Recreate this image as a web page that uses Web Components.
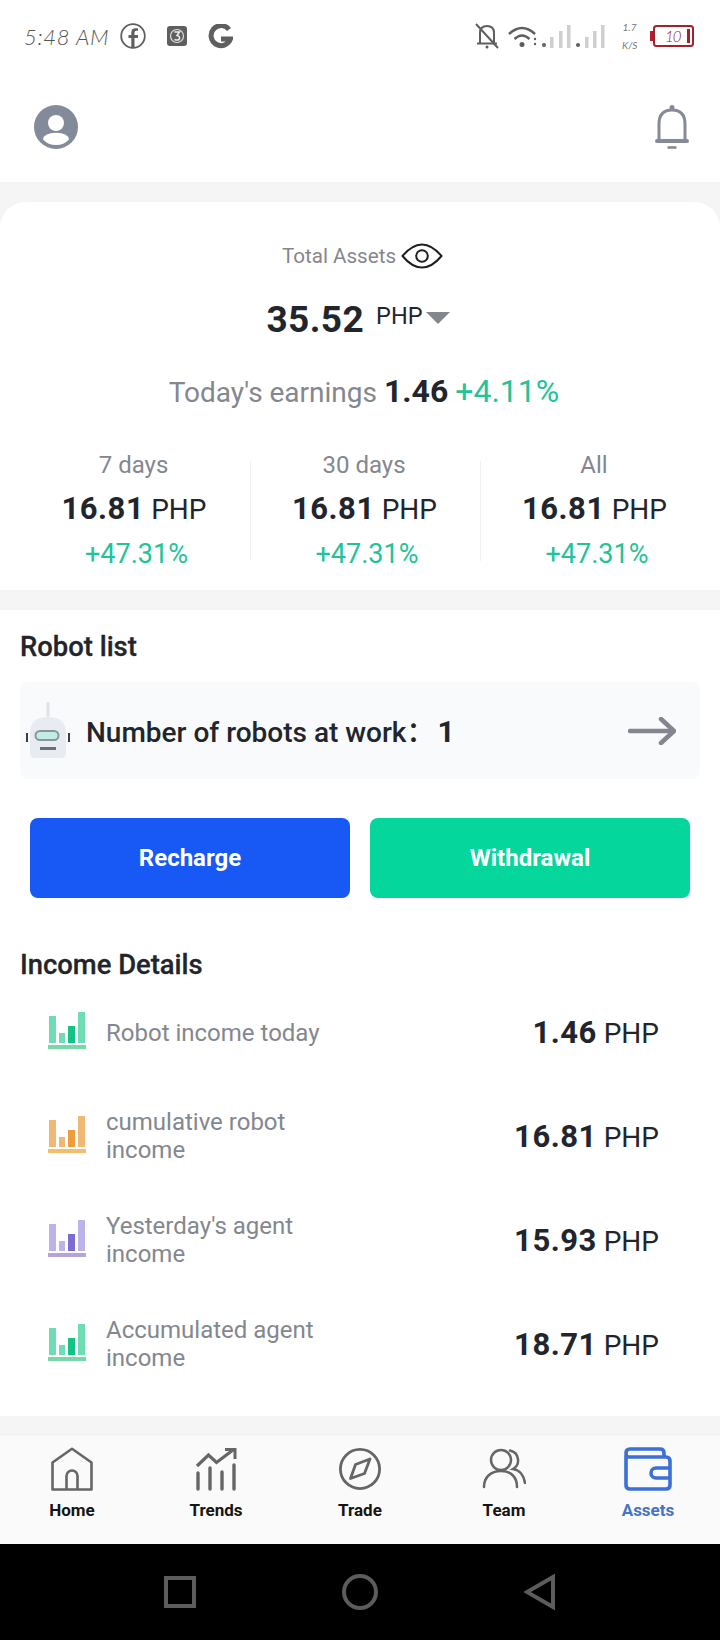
<!DOCTYPE html>
<html>
<head>
<meta charset="utf-8">
<style>
  html, body { margin: 0; padding: 0; background: #fff; }
  body { width: 720px; height: 1640px; overflow: hidden; font-family: Roboto, "Liberation Sans", sans-serif; color: #22252b; }
</style>
</head>
<body>
<status-bar></status-bar>
<top-header></top-header>
<asset-card>
  <stat-col label="7 days"></stat-col>
  <stat-col label="30 days"></stat-col>
  <stat-col label="All"></stat-col>
</asset-card>
<main-panel>
  <robot-list></robot-list>
  <action-row></action-row>
  <section-title style="margin-top:49px">Income Details</section-title>
  <income-row color="#6fdcb3" dark="#12c384" base="#7ad8a8" value="1.46" style="height:103px;margin-top:-2px">Robot income today</income-row>
  <income-row color="#eeb875" dark="#ef9c3c" base="#f3bd6e" value="16.81">cumulative robot<br>income</income-row>
  <income-row color="#bdb2ea" dark="#7e6cd6" base="#b3a4dc" value="15.93">Yesterday's agent<br>income</income-row>
  <income-row color="#6fdcb3" dark="#12c384" base="#7ad8a8" value="18.71">Accumulated agent<br>income</income-row>
</main-panel>
<tab-bar>
  <tab-item label="Home"><svg viewBox="0 0 44 44" width="44" height="44" fill="none" stroke="#666" stroke-width="2.6"><path d="M2.5 42.5V15.5L22 1.8 41.5 15.5V42.5H2.5Z" stroke-linejoin="round"/><path d="M16.5 42V29a5.500 5.500 0 0 1 11 0V42"/></svg></tab-item>
  <tab-item label="Trends"><svg viewBox="0 0 44 44" width="44" height="44" fill="none" stroke="#666"><path d="M3 19 14.500 8 22.500 15.500 39 3" stroke-width="3.200"/><path d="M31 2.500H41V12" stroke-width="3"/><path d="M4 26V42M16 21V42M28 25V42M40 18V42" stroke-width="3.400" stroke-linecap="round"/></svg></tab-item>
  <tab-item label="Trade"><svg viewBox="0 0 44 44" width="44" height="44" fill="none" stroke="#666" stroke-width="2.800"><circle cx="22" cy="22" r="19.600"/><path d="M32 12 26.500 26.500 12.500 31.500 17.500 17.500Z" stroke-linejoin="round"/></svg></tab-item>
  <tab-item label="Team"><svg viewBox="0 0 44 44" width="44" height="44" fill="none" stroke="#666" stroke-width="2.500" stroke-linecap="round"><circle cx="19" cy="13" r="10"/><path d="M2 40C2 30 9 24 19 24S35 30 35 40"/><path d="M28 3.500A10 10 0 0 1 31 22C38 23 42 29 43 36"/></svg></tab-item>
  <tab-item label="Assets" active><svg viewBox="0 0 48 44" width="48" height="44" fill="none" stroke="#3a70d8" stroke-width="3.600" stroke-linejoin="round"><path d="M2 8V38Q2 42 6 42H42Q46 42 46 38V14Q46 10 42 10H5Q2 10 2 6 2 2 6 2H36Q40 2 40 6V10"/><path d="M46 21H32A5 5 0 0 0 32 31H46"/></svg></tab-item>
</tab-bar>
<system-nav></system-nav>

<script>
class StatusBar extends HTMLElement {
  constructor() {
    super();
    this.attachShadow({ mode: "open" }).innerHTML = `
      <style>
        :host { display: flex; align-items: center; height: 72px; box-sizing: border-box; padding: 0 26px 0 24px; color: #5f5f5f; }
        .time { font: italic 300 22px Lato, "Liberation Sans", sans-serif; width: 96px; white-space: nowrap; letter-spacing: .7px; color: #555; }
        .left { display: flex; align-items: center; }
        .right { margin-left: auto; display: flex; align-items: center; }
        svg { display: block; }
        .speed { width: 15px; margin: 0 13px 0 15px; font: italic 400 10px/18px Lato, sans-serif; text-align: center; color: #777; }
        .batt { position: relative; width: 44px; height: 22px; }
        .batt span { position: absolute; left: 15px; top: 0; font: italic 300 15px/22px Lato, sans-serif; letter-spacing: -1px; color: #8f1d2c; }
      </style>
      <div class="left">
        <div class="time">5:48 AM</div>
        <svg width="26" height="26" viewBox="0 0 26 26" fill="none"><circle cx="13" cy="13" r="11.800" stroke="#5f5f5f" stroke-width="1.800"/><path d="M14.500 25V15H18V12H14.500V9.500Q14.500 7.800 16.300 7.800H18V5.200H15.500Q11.300 5.200 11.300 9.500V12H8.500V15H11.300V25Z" fill="#5f5f5f"/></svg>
        <svg style="margin-left:21px" width="20" height="20" viewBox="0 0 20 20"><rect width="20" height="20" rx="3" fill="#5f5f5f"/><circle cx="10" cy="10" r="6.500" fill="none" stroke="#ddd" stroke-width="1.200"/><path d="M7.500 6H12.500L10 9.500Q13 10 12.500 12.500T7.500 13.500" fill="none" stroke="#eee" stroke-width="1.500"/></svg>
        <svg style="margin-left:21px" width="25" height="25" viewBox="0 0 25 25"><path d="M21 5.500A10 10 0 1 0 22.500 15H13" fill="none" stroke="#5f5f5f" stroke-width="5"/></svg>
      </div>
      <div class="right">
        <svg width="24" height="26" viewBox="0 0 24 26" fill="none" stroke="#5f5f5f" stroke-width="2"><path d="M5 20V10Q5 3 12 3T19 10V20"/><path d="M2 20.500H22" /><path d="M1 1 23 25" /><circle cx="12" cy="24" r="1.500" fill="#5f5f5f" stroke="none"/></svg>
        <svg style="margin-left:9px" width="29" height="23" viewBox="0 0 29 23" fill="none" stroke="#5f5f5f" stroke-width="2.400"><path d="M1 9Q14 -3 27 9"/><path d="M6.500 14Q14 7 21.500 14"/><circle cx="14" cy="19.500" r="2.500" fill="#5f5f5f" stroke="none"/></svg>
        <svg style="margin-left:-6px" width="76" height="24" viewBox="0 0 76 24"><circle cx="4" cy="15" r="1.200" fill="#5f5f5f"/><circle cx="4" cy="20" r="1.200" fill="#5f5f5f"/><circle cx="13" cy="21" r="2" fill="#5f5f5f"/><g fill="#cfcfcf"><rect x="19" y="13" width="3.500" height="11"/><rect x="28" y="7" width="3.500" height="17"/><rect x="36" y="1" width="3.500" height="23"/></g><circle cx="47" cy="21" r="2" fill="#5f5f5f"/><g fill="#cfcfcf"><rect x="54" y="13" width="3.500" height="11"/><rect x="62" y="7" width="3.500" height="17"/><rect x="70" y="1" width="3.500" height="23"/></g></svg>
        <div class="speed">1.7<br>K/S</div>
        <div class="batt">
          <svg width="44" height="22" viewBox="0 0 44 22" fill="none"><rect x="0" y="6" width="3" height="10" fill="#b3202e"/><rect x="4" y="1" width="39" height="20" rx="2.500" stroke="#a5202d" stroke-width="2"/><rect x="37" y="4" width="3" height="14" fill="#a5202d"/></svg>
          <span>10</span>
        </div>
      </div>`;
  }
}

class TopHeader extends HTMLElement {
  constructor() {
    super();
    this.attachShadow({ mode: "open" }).innerHTML = `
      <style>
        :host { display: flex; align-items: center; justify-content: space-between; height: 110px; box-sizing: border-box; padding: 0 31px 0 34px; background: #fff; }
        svg { display: block; }
      </style>
      <svg width="44" height="44" viewBox="0 0 44 44"><circle cx="22" cy="22" r="22" fill="#838a9a"/><circle cx="22" cy="18" r="8" fill="#fff"/><path d="M9 34.500Q10 27.800 22 27.800T35 34.500Q30 40 22 40T9 34.500Z" fill="#fff"/></svg>
      <svg width="34" height="44" viewBox="0 0 34 44" fill="none" stroke="#868a94"><circle cx="17" cy="2.500" r="2.500" fill="#868a94" stroke="none"/><path d="M4 36V19Q4 5 17 5T30 19V36" stroke-width="3"/><path d="M2 36H32" stroke-width="4" stroke-linecap="round"/><path d="M12.500 42.500H21.500" stroke-width="2.600"/></svg>`;
  }
}

class AssetCard extends HTMLElement {
  constructor() {
    super();
    this.attachShadow({ mode: "open" }).innerHTML = `
      <style>
        :host { display: block; background: #f5f5f5; padding: 20px 0; }
        .card { background: #fff; border-radius: 26px 26px 0 0; height: 388px; box-sizing: border-box; padding-top: 40px; text-align: center; }
        .title { display: flex; justify-content: center; align-items: center; gap: 5px; height: 28px; font-size: 20.600px; color: #84878e; padding-left: 5px; }
        .total { display: flex; justify-content: center; margin-top: 28px; height: 44px; color: #22252b; padding-right: 4px; }
        .num { font-size: 37px; font-weight: 700; line-height: 44px; letter-spacing: .4px; }
        .unit { font-size: 23.500px; line-height: 36px; margin-left: 12px; }
        .tri { width: 0; height: 0; margin: 14px 0 0 3px; border: 12px solid transparent; border-top: 12px solid #85878f; border-bottom: 0; }
        .today { margin-top: 31px; padding-left: 8px; font-size: 28px; line-height: 36px; color: #84878e; white-space: nowrap; }
        .today b { color: #22252b; font-weight: 700; font-size: 32px; }
        .today i { color: #22c398; font-style: normal; font-size: 32px; }
        .stats { display: grid; grid-template-columns: repeat(3, 230px); margin: 50px 0 0 20px; }
        ::slotted(stat-col:not(:first-child)) { border-left: 1px solid #f1f1f3; }
      </style>
      <div class="card">
        <div class="title">Total Assets
          <svg width="42" height="26" viewBox="0 0 42 26" fill="none" stroke="#1f1f1f" stroke-width="2"><path d="M1.500 13Q11 1.500 21 1.500T40.500 13Q31 24.500 21 24.500T1.500 13Z" stroke-linejoin="round"/><circle cx="21" cy="13" r="5.800"/></svg>
        </div>
        <div class="total"><span class="num">35.52</span><span class="unit">PHP</span><span class="tri"></span></div>
        <div class="today">Today's earnings <b>1.46</b> <i>+4.11%</i></div>
        <div class="stats"><slot></slot></div>
      </div>`;
  }
}

class StatCol extends HTMLElement {
  constructor() {
    super();
    this.attachShadow({ mode: "open" }).innerHTML = `
      <style>
        :host { display: block; height: 100px; text-align: center; }
        .wrap { margin-top: -11px; }
        .label { font-size: 24px; line-height: 30px; color: #84878e; padding-right: 3px; }
        .value { font-size: 28px; line-height: 36px; margin-top: 11px; padding-right: 2px; color: #22252b; white-space: nowrap; }
        .value b { font-size: 31px; font-weight: 700; letter-spacing: .5px; }
        .pct { font-size: 27px; line-height: 32px; margin-top: 10px; color: #22c398; padding-left: 3px; }
      </style>
      <div class="wrap">
        <div class="label">${this.getAttribute("label")}</div>
        <div class="value"><b>16.81</b> <span>PHP</span></div>
        <div class="pct">+47.31%</div>
      </div>`;
  }
}

class MainPanel extends HTMLElement {
  constructor() {
    super();
    this.attachShadow({ mode: "open" }).innerHTML = `
      <style>
        :host { display: block; background: #fff; height: 806px; box-sizing: border-box; padding-top: 19px; }
      </style>
      <slot></slot>`;
  }
}

class SectionTitle extends HTMLElement {
  constructor() {
    super();
    this.attachShadow({ mode: "open" }).innerHTML = `
      <style>
        :host { display: block; padding-left: 20px; font-size: 27.400px; line-height: 36px; font-weight: 500; color: #22252b; -webkit-text-stroke: .3px #22252b; }
      </style>
      <slot></slot>`;
  }
}

class RobotList extends HTMLElement {
  constructor() {
    super();
    this.attachShadow({ mode: "open" }).innerHTML = `
      <style>
        :host { display: block; }
        .row { display: flex; align-items: center; height: 97px; margin: 17px 20px 0; background: #f9fafb; border-radius: 8px; box-sizing: border-box; padding: 0 24px 0 6px; }
        .name { margin: -1px 0 0 16px; font: 500 28px Roboto, "Noto Sans CJK SC", sans-serif; color: #22252b; white-space: nowrap; }
        .name span { margin-left: 3px; font-weight: 700; font-size: 30px; }
        svg { display: block; }
        .arrow { margin-left: auto; }
      </style>
      <section-title>Robot list</section-title>
      <div class="row">
        <svg width="44" height="60" viewBox="0 0 44 60" fill="none">
          <rect x="20.500" y="1" width="3" height="15" rx="1.500" fill="#dfe2e6"/>
          <path d="M4 52V32Q4 16 22 16T40 32V52Q40 57 35 57H9Q4 57 4 52Z" fill="#e8ecf2"/>
          <rect x="9.500" y="30" width="23" height="9" rx="4.500" fill="#c4ebe4" stroke="#85999c" stroke-width="2"/>
          <rect x="14" y="46" width="16" height="3" fill="#6a7078"/>
          <path d="M1 32V41M43 32V41" stroke="#3a3d44" stroke-width="2"/>
        </svg>
        <div class="name">Number of robots at work：<span>1</span></div>
        <svg class="arrow" width="48" height="28" viewBox="0 0 48 28" fill="none" stroke="#84858f" stroke-width="4.500" stroke-linecap="round" stroke-linejoin="round"><path d="M2 14H45"/><path d="M33 2 46 14 33 26"/></svg>
      </div>`;
  }
}

class ActionRow extends HTMLElement {
  constructor() {
    super();
    this.attachShadow({ mode: "open" }).innerHTML = `
      <style>
        :host { display: flex; gap: 20px; margin: 39px 30px 0; }
        div { flex: 1; height: 80px; border-radius: 8px; display: flex; align-items: center; justify-content: center; color: #fff; font-size: 24px; font-weight: 700; }
        .blue { background: #1859f5; }
        .green { background: #05d69c; }
      </style>
      <div class="blue">Recharge</div>
      <div class="green">Withdrawal</div>`;
  }
}

class IncomeRow extends HTMLElement {
  constructor() {
    super();
    const c = this.getAttribute("color"), d = this.getAttribute("dark"), b = this.getAttribute("base");
    this.attachShadow({ mode: "open" }).innerHTML = `
      <style>
        :host { display: flex; align-items: center; height: 104px; padding: 0 61px 0 48px; }
        svg { display: block; flex: none; margin-top: -4px; }
        .text { margin-left: 20px; font-size: 24px; line-height: 28px; color: #84878e; white-space: nowrap; }
        .val { margin-left: auto; font-size: 28px; color: #22252b; white-space: nowrap; }
        .val b { font-size: 31px; font-weight: 700; letter-spacing: .5px; }
      </style>
      <svg width="38" height="37" viewBox="0 0 38 37">
        <rect x="1" y="4" width="7" height="27" fill="${c}"/>
        <rect x="11" y="21" width="6" height="10" fill="${c}"/>
        <rect x="20" y="14" width="7" height="17" fill="${d}"/>
        <rect x="30" y="0" width="7" height="31" fill="${c}"/>
        <rect x="0" y="33" width="38" height="4" fill="${b}"/>
      </svg>
      <div class="text"><slot></slot></div>
      <div class="val"><b>${this.getAttribute("value")}</b> PHP</div>`;
  }
}

class TabBar extends HTMLElement {
  constructor() {
    super();
    this.attachShadow({ mode: "open" }).innerHTML = `
      <style>
        :host { display: grid; grid-template-columns: repeat(5, 144px); background: #fafafa; height: 128px; box-sizing: border-box; border-top: 18px solid #f5f5f5; box-shadow: inset 0 2px 2px -1px #eee; }
      </style>
      <slot></slot>`;
  }
}

class TabItem extends HTMLElement {
  constructor() {
    super();
    this.attachShadow({ mode: "open" }).innerHTML = `
      <style>
        :host { display: flex; flex-direction: column; align-items: center; padding-top: 13px; font-size: 17px; font-weight: 700; color: #151515; }
        :host([active]) { color: #4475c6; }
        .icon { height: 44px; display: flex; justify-content: center; }
        .label { margin-top: 7px; line-height: 24px; }
      </style>
      <div class="icon"><slot></slot></div>
      <div class="label">${this.getAttribute("label")}</div>`;
  }
}

class SystemNav extends HTMLElement {
  constructor() {
    super();
    this.attachShadow({ mode: "open" }).innerHTML = `
      <style>
        :host { display: grid; grid-template-columns: 180px 180px 180px; justify-content: center; align-items: center; justify-items: center; height: 96px; background: #000; }
        svg { display: block; }
      </style>
      <svg width="32" height="32" viewBox="0 0 32 32" fill="none" stroke="#5c5c5c" stroke-width="4"><rect x="2" y="2" width="28" height="28"/></svg>
      <svg width="36" height="36" viewBox="0 0 36 36" fill="none" stroke="#5c5c5c" stroke-width="4"><circle cx="18" cy="18" r="16"/></svg>
      <svg width="32" height="36" viewBox="0 0 32 36" fill="none" stroke="#5c5c5c" stroke-width="4"><path d="M29 3V33L3 18Z"/></svg>`;
  }
}

customElements.define("status-bar", StatusBar);
customElements.define("top-header", TopHeader);
customElements.define("asset-card", AssetCard);
customElements.define("stat-col", StatCol);
customElements.define("main-panel", MainPanel);
customElements.define("section-title", SectionTitle);
customElements.define("robot-list", RobotList);
customElements.define("action-row", ActionRow);
customElements.define("income-row", IncomeRow);
customElements.define("tab-bar", TabBar);
customElements.define("tab-item", TabItem);
customElements.define("system-nav", SystemNav);
</script>
</body>
</html>
